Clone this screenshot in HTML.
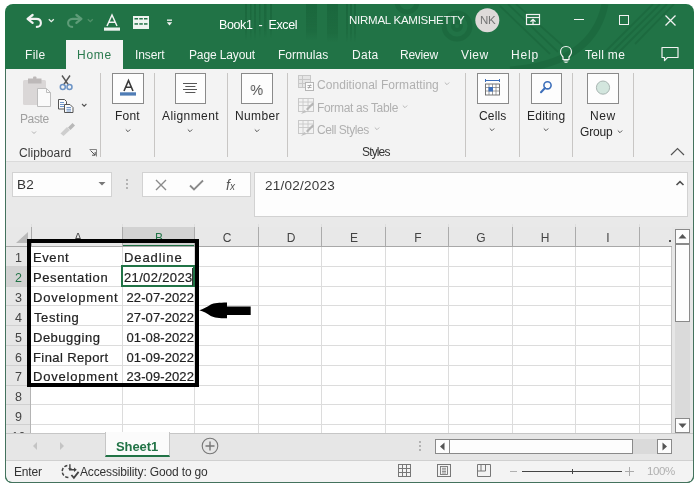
<!DOCTYPE html>
<html><head><meta charset="utf-8"><style>
html,body{margin:0;padding:0;}
body{width:700px;height:491px;position:relative;overflow:hidden;background:#ffffff;font-family:"Liberation Sans", sans-serif;}
.t{position:absolute;white-space:pre;font-family:"Liberation Sans", sans-serif;will-change:transform;}
</style></head><body>
<div style="position:absolute;left:5px;top:4px;width:689px;height:479px;background:#217346;border-radius:8px 8px 7px 7px;"></div>
<div style="position:absolute;left:6px;top:69px;width:687px;height:413px;background:#f3f3f3;border-radius:0 0 6px 6px;"></div>
<svg style="position:absolute;left:5px;top:4px;" width="689" height="65" viewBox="0 0 689 65">
<defs><linearGradient id="fd" x1="0" y1="0" x2="0" y2="1"><stop offset="0" stop-color="#1a663c" stop-opacity="1"/><stop offset="0.75" stop-color="#1a663c" stop-opacity="0.6"/><stop offset="1" stop-color="#1a663c" stop-opacity="0"/></linearGradient></defs>
<g fill="url(#fd)" opacity="0.9">
<rect x="240" y="0" width="2" height="36"/><rect x="245" y="0" width="1.5" height="36"/><rect x="249" y="0" width="2" height="36"/><rect x="254" y="0" width="1.5" height="34"/><rect x="259" y="0" width="2.5" height="34"/><rect x="265" y="0" width="2" height="34"/>
<rect x="301" y="0" width="11" height="36"/><rect x="322" y="0" width="11" height="38"/>
<rect x="341" y="0" width="2" height="38"/><rect x="345" y="0" width="2" height="38"/><rect x="349" y="0" width="2" height="38"/>
</g>
<g fill="none" stroke="#1b673d" opacity="0.7">
<circle cx="452" cy="22" r="13" stroke-width="5"/><circle cx="452" cy="22" r="4" stroke-width="4"/><circle cx="402" cy="-2" r="10" stroke-width="5"/>
<path d="M600 0 C 592 40, 560 62, 505 66" stroke-width="7"/>
<path d="M495 2 L545 50 M503 0 L553 48 M511 0 L558 42" stroke-width="1.8"/>
<path d="M655 0 L605 50 M648 0 L598 50 M662 0 L612 50 M669 0 L630 40" stroke-width="1.8"/>
</g>
</svg>
<svg style="position:absolute;left:24px;top:12px;" width="22" height="18" viewBox="0 0 22 18"><path d="M5 6.9 H12.3 C15.5 6.9 16.9 9 16.9 11 C16.9 13.2 15.3 14.9 12.8 14.9" fill="none" stroke="#f2f2f2" stroke-width="2.1" stroke-linecap="round"/><path d="M8.6 3 L3.6 6.9 L8.6 10.8" fill="none" stroke="#f2f2f2" stroke-width="2.3" stroke-linecap="round" stroke-linejoin="round"/></svg>
<svg style="position:absolute;left:47px;top:17px;" width="9" height="7" viewBox="0 0 9 7"><path d="M1.8 2.2 L4.3 4.7 L6.8 2.2" fill="none" stroke="#e8efe9" stroke-width="1.3"/></svg>
<svg style="position:absolute;left:63px;top:12px;" width="22" height="18" viewBox="0 0 22 18"><path d="M17 6.9 H9.7 C6.5 6.9 5.1 9 5.1 11 C5.1 13.2 6.7 14.9 9.2 14.9" fill="none" stroke="#5e9c78" stroke-width="2.1" stroke-linecap="round"/><path d="M13.4 3 L18.4 6.9 L13.4 10.8" fill="none" stroke="#5e9c78" stroke-width="2.3" stroke-linecap="round" stroke-linejoin="round"/></svg>
<svg style="position:absolute;left:86px;top:17px;" width="9" height="7" viewBox="0 0 9 7"><path d="M1.8 2.2 L4.3 4.7 L6.8 2.2" fill="none" stroke="#4f9068" stroke-width="1.3"/></svg>
<svg style="position:absolute;left:103px;top:13px;" width="18" height="19" viewBox="0 0 18 19"><path d="M4 13 L9 2 L14 13 M5.8 9.2 H12.2" fill="none" stroke="#f2f2f2" stroke-width="1.5"/><rect x="1" y="14.5" width="16" height="3.2" fill="#eef3ef"/></svg>
<svg style="position:absolute;left:132px;top:15px;" width="18" height="15" viewBox="0 0 18 15"><rect x="1" y="1" width="16" height="13" fill="#f0f4f1"/><g fill="#217346"><rect x="2.5" y="3" width="3.5" height="1.5"/><rect x="7.3" y="3" width="3.5" height="1.5"/><rect x="12" y="3" width="3.5" height="1.5"/><rect x="2.5" y="8.2" width="3.5" height="1.5"/><rect x="7.3" y="8.2" width="3.5" height="1.5"/><rect x="12" y="8.2" width="3.5" height="1.5"/></g></svg>
<svg style="position:absolute;left:165px;top:17px;" width="9" height="10" viewBox="0 0 9 10"><rect x="2" y="2.5" width="5" height="1.3" fill="#f2f2f2"/><path d="M1.8 5.2 H7.2 L4.5 8.6 Z" fill="#f2f2f2"/></svg>
<div class="t" style="left:219px;top:19px;font-size:12.5px;line-height:12.5px;color:#ffffff;font-weight:400;letter-spacing:-0.4px;">Book1&nbsp;&nbsp;-&nbsp;&nbsp;Excel</div>
<div class="t" style="left:349px;top:15px;font-size:11.5px;line-height:11.5px;color:#f4f7f5;font-weight:400;letter-spacing:-0.25px;">NIRMAL KAMISHETTY</div>
<svg style="position:absolute;left:475px;top:8px;" width="25" height="25" viewBox="0 0 25 25"><circle cx="12.3" cy="12.2" r="12" fill="#dedad9"/></svg>
<div class="t" style="left:480px;top:15px;font-size:11.5px;line-height:11.5px;color:#757575;font-weight:400;letter-spacing:-0.3px;">NK</div>
<svg style="position:absolute;left:525px;top:13px;" width="16" height="13" viewBox="0 0 16 13"><rect x="1.5" y="1.5" width="13" height="10" fill="none" stroke="#f2f2f2" stroke-width="1.2"/><path d="M1.5 4.5 H14.5" stroke="#f2f2f2" stroke-width="1.2"/><path d="M8 11 V6.5 M5.5 8.8 L8 6.3 L10.5 8.8" fill="none" stroke="#f2f2f2" stroke-width="1.3"/></svg>
<div style="position:absolute;left:574px;top:19px;width:10px;height:1px;background:#f2f2f2"></div>
<div style="position:absolute;left:619px;top:15px;width:10px;height:10px;border:1.2px solid #f2f2f2;box-sizing:border-box"></div>
<svg style="position:absolute;left:664px;top:14px;" width="13" height="13" viewBox="0 0 13 13"><path d="M1.5 1.5 L11.5 11.5 M11.5 1.5 L1.5 11.5" stroke="#f2f2f2" stroke-width="1.3"/></svg>
<div style="position:absolute;left:66px;top:40px;width:57px;height:29px;background:#f3f3f3"></div>
<div class="t" style="left:25px;top:49px;font-size:12px;line-height:12px;color:#f4f7f5;font-weight:400;letter-spacing:0.3px;">File</div>
<div class="t" style="left:135px;top:49px;font-size:12px;line-height:12px;color:#f4f7f5;font-weight:400;letter-spacing:-0.1px;">Insert</div>
<div class="t" style="left:189px;top:49px;font-size:12px;line-height:12px;color:#f4f7f5;font-weight:400;letter-spacing:-0.13px;">Page Layout</div>
<div class="t" style="left:278px;top:49px;font-size:12px;line-height:12px;color:#f4f7f5;font-weight:400;letter-spacing:0.03px;">Formulas</div>
<div class="t" style="left:352px;top:49px;font-size:12px;line-height:12px;color:#f4f7f5;font-weight:400;letter-spacing:0.3px;">Data</div>
<div class="t" style="left:400px;top:49px;font-size:12px;line-height:12px;color:#f4f7f5;font-weight:400;letter-spacing:-0.24px;">Review</div>
<div class="t" style="left:461px;top:49px;font-size:12px;line-height:12px;color:#f4f7f5;font-weight:400;letter-spacing:0.45px;">View</div>
<div class="t" style="left:511px;top:49px;font-size:12px;line-height:12px;color:#f4f7f5;font-weight:400;letter-spacing:0.8px;">Help</div>
<div class="t" style="left:585px;top:49px;font-size:12px;line-height:12px;color:#f4f7f5;font-weight:400;letter-spacing:0.3px;">Tell me</div>
<div class="t" style="left:77px;top:49px;font-size:12px;line-height:12px;color:#2a7a4e;font-weight:400;letter-spacing:0.75px;">Home</div>
<svg style="position:absolute;left:558px;top:45px;" width="16" height="19" viewBox="0 0 16 19"><path d="M8 1.5 C4.5 1.5 2.5 4 2.5 7 C2.5 9.5 4 10.8 5 12 V14.5 H11 V12 C12 10.8 13.5 9.5 13.5 7 C13.5 4 11.5 1.5 8 1.5 Z" fill="none" stroke="#f2f2f2" stroke-width="1.2"/><path d="M5.5 15.8 H10.5 M6.5 17.3 H9.5" stroke="#f2f2f2" stroke-width="1"/></svg>
<svg style="position:absolute;left:660px;top:45px;" width="20" height="18" viewBox="0 0 20 18"><path d="M2 2.5 H18 V12.5 H7.5 L4.5 15.5 V12.5 H2 Z" fill="none" stroke="#f2f2f2" stroke-width="1.2" stroke-linejoin="round"/></svg>
<div style="position:absolute;left:100px;top:73px;width:1px;height:84px;background:#c8c6c4"></div>
<div style="position:absolute;left:154px;top:73px;width:1px;height:84px;background:#c8c6c4"></div>
<div style="position:absolute;left:227px;top:73px;width:1px;height:84px;background:#c8c6c4"></div>
<div style="position:absolute;left:287px;top:73px;width:1px;height:84px;background:#c8c6c4"></div>
<div style="position:absolute;left:465px;top:73px;width:1px;height:84px;background:#c8c6c4"></div>
<div style="position:absolute;left:519px;top:73px;width:1px;height:84px;background:#c8c6c4"></div>
<div style="position:absolute;left:572px;top:73px;width:1px;height:84px;background:#c8c6c4"></div>
<div style="position:absolute;left:633px;top:73px;width:1px;height:84px;background:#c8c6c4"></div>
<svg style="position:absolute;left:18px;top:72px;" width="40" height="40" viewBox="0 0 40 40"><rect x="5" y="8" width="23" height="25" rx="1.5" fill="#dad7d7"/>
<path d="M10 6.5 H23.5 V11.5 H10 Z" fill="#bdb9b9"/><rect x="15" y="4.5" width="3.5" height="3" rx="1" fill="#bdb9b9"/>
<path d="M19.5 16.5 H28.5 L32.5 20.5 V34.5 H19.5 Z" fill="#fafafa" stroke="#bdbdbd" stroke-width="1"/>
<path d="M28.5 16.5 V20.5 H32.5" fill="none" stroke="#bdbdbd" stroke-width="1"/></svg>
<div class="t" style="left:20px;top:113px;font-size:12px;line-height:12px;color:#a0a0a0;font-weight:400;letter-spacing:-0.4px;">Paste</div>
<svg style="position:absolute;left:30px;top:130px;" width="8" height="6" viewBox="0 0 8 6"><path d="M2 1.5 L4 3.5 L6 1.5" fill="none" stroke="#b0b0b0" stroke-width="1"/></svg>
<svg style="position:absolute;left:57px;top:74px;" width="18" height="18" viewBox="0 0 18 18"><path d="M5 1.5 L11.5 11 M13 1.5 L6.5 11" stroke="#555" stroke-width="1.4"/><circle cx="5.8" cy="13" r="2.5" fill="none" stroke="#6b93c5" stroke-width="1.5"/><circle cx="12.5" cy="13" r="2.5" fill="none" stroke="#6b93c5" stroke-width="1.5"/></svg>
<svg style="position:absolute;left:57px;top:98px;" width="18" height="16" viewBox="0 0 18 16"><path d="M1.5 1.5 H7.5 L9.5 3.5 V11 H1.5 Z" fill="#fbfbfb" stroke="#555" stroke-width="1"/><path d="M3 4.5 H7 M3 6.5 H7 M3 8.5 H7" stroke="#4e7fbf" stroke-width="0.8"/><path d="M7.5 6.5 H13 L16 9.5 V14.5 H7.5 Z" fill="#fbfbfb" stroke="#555" stroke-width="1"/><path d="M9.5 9.5 H14 M9.5 11.3 H14 M9.5 13 H14" stroke="#4e7fbf" stroke-width="0.8"/></svg>
<svg style="position:absolute;left:80px;top:102px;" width="8" height="6" viewBox="0 0 8 6"><path d="M2 2 L4.2 4.2 L6.4 2" fill="none" stroke="#555" stroke-width="1.1"/></svg>
<svg style="position:absolute;left:58px;top:120px;" width="18" height="17" viewBox="0 0 18 17"><path d="M10 7.5 L14.5 3 L17 5.5 L12.5 10 Z" fill="#b8b8b8"/><path d="M2.5 13.5 L9 7 L12 10 L5.5 16 Z" fill="#cecece"/></svg>
<div class="t" style="left:19px;top:147px;font-size:12px;line-height:12px;color:#3a3a3a;font-weight:400;letter-spacing:0.1px;">Clipboard</div>
<svg style="position:absolute;left:88px;top:148px;" width="10" height="10" viewBox="0 0 10 10"><path d="M1.5 1.5 H8.5 V8.5" fill="none" stroke="#777" stroke-width="0.9"/><path d="M2.5 2.5 L7 7 M4 7.2 H7.2 V4" fill="none" stroke="#555" stroke-width="1"/></svg>
<div style="position:absolute;left:112px;top:73px;width:32px;height:31px;background:#fdfdfd;border:1px solid #8a8a8a;box-sizing:border-box"></div>
<svg style="position:absolute;left:112px;top:73px;" width="32" height="31" viewBox="0 0 32 31"><path d="M12 18 L16.5 7.5 L21 18 M13.6 14.3 H19.4" fill="none" stroke="#3a3a3a" stroke-width="1.6"/><rect x="8" y="19.3" width="16" height="3.3" fill="#4f7cb5"/></svg>
<div class="t" style="left:115px;top:110px;font-size:12px;line-height:12px;color:#262626;font-weight:400;letter-spacing:0.2px;">Font</div>
<svg style="position:absolute;left:124px;top:128px;" width="8" height="6" viewBox="0 0 8 6"><path d="M1.8 1.5 L4 3.7 L6.2 1.5" fill="none" stroke="#555" stroke-width="1"/></svg>
<div style="position:absolute;left:175px;top:73px;width:31px;height:31px;background:#fdfdfd;border:1px solid #8a8a8a;box-sizing:border-box"></div>
<svg style="position:absolute;left:175px;top:73px;" width="31" height="31" viewBox="0 0 31 31"><path d="M8 10.5 H22 M10.3 13.5 H20.4 M8 16.5 H22 M10.3 19.5 H20.4" stroke="#555" stroke-width="1.1"/></svg>
<div class="t" style="left:162px;top:110px;font-size:12px;line-height:12px;color:#262626;font-weight:400;letter-spacing:0.4px;">Alignment</div>
<svg style="position:absolute;left:186px;top:128px;" width="8" height="6" viewBox="0 0 8 6"><path d="M1.8 1.5 L4 3.7 L6.2 1.5" fill="none" stroke="#555" stroke-width="1"/></svg>
<div style="position:absolute;left:241px;top:73px;width:32px;height:31px;background:#fdfdfd;border:1px solid #8a8a8a;box-sizing:border-box"></div>
<div class="t" style="left:250px;top:82px;font-size:15px;line-height:15px;color:#505050;font-weight:400;letter-spacing:0px;transform:scaleX(0.95);">%</div>
<div class="t" style="left:235px;top:110px;font-size:12px;line-height:12px;color:#262626;font-weight:400;letter-spacing:0.35px;">Number</div>
<svg style="position:absolute;left:253px;top:128px;" width="8" height="6" viewBox="0 0 8 6"><path d="M1.8 1.5 L4 3.7 L6.2 1.5" fill="none" stroke="#555" stroke-width="1"/></svg>
<svg style="position:absolute;left:297px;top:74px;" width="18" height="18" viewBox="0 0 18 18"><rect x="1.5" y="1.5" width="12" height="12" fill="#e6e6e6" stroke="#c8c8c8" stroke-width="1"/><path d="M1.5 5.5 H13.5 M1.5 9.5 H13.5 M5.5 1.5 V13.5" stroke="#c8c8c8" stroke-width="1"/><rect x="8.5" y="8.5" width="8" height="8" fill="#fafafa" stroke="#b5b5b5" stroke-width="1"/><path d="M10.5 11.5 H14.5 M10.5 13.5 H14.5 M13.5 10.5 L11.5 14.5" stroke="#9a9a9a" stroke-width="0.8"/></svg>
<div class="t" style="left:317px;top:79px;font-size:12px;line-height:12px;color:#b0b0b0;font-weight:400;letter-spacing:0.05px;">Conditional Formatting</div>
<svg style="position:absolute;left:443px;top:81px;" width="8" height="6" viewBox="0 0 8 6"><path d="M1.8 1.5 L4 3.7 L6.2 1.5" fill="none" stroke="#b8b8b8" stroke-width="1"/></svg>
<svg style="position:absolute;left:297px;top:97px;" width="18" height="18" viewBox="0 0 18 18"><rect x="1.5" y="1.5" width="15" height="13" fill="#f2f2f2" stroke="#c8c8c8" stroke-width="1"/><path d="M1.5 5 H16.5 M1.5 8.5 H16.5 M6 1.5 V14.5 M11 1.5 V14.5" stroke="#c8c8c8" stroke-width="0.9"/><path d="M9 12 L15.5 5.5 L17 7 L10.5 13.5 Z" fill="#b5b5b5"/><path d="M4 17 L7.5 13 L9.5 15 Z" fill="#c0c0c0"/></svg>
<div class="t" style="left:317px;top:102px;font-size:12px;line-height:12px;color:#b0b0b0;font-weight:400;letter-spacing:-0.32px;">Format as Table</div>
<svg style="position:absolute;left:401px;top:104px;" width="8" height="6" viewBox="0 0 8 6"><path d="M1.8 1.5 L4 3.7 L6.2 1.5" fill="none" stroke="#b8b8b8" stroke-width="1"/></svg>
<svg style="position:absolute;left:297px;top:119px;" width="18" height="18" viewBox="0 0 18 18"><rect x="1.5" y="1.5" width="15" height="13" fill="#f2f2f2" stroke="#c8c8c8" stroke-width="1"/><path d="M1.5 5 H16.5 M1.5 8.5 H16.5 M6 1.5 V14.5 M11 1.5 V14.5" stroke="#c8c8c8" stroke-width="0.9"/><path d="M9 12 L15.5 5.5 L17 7 L10.5 13.5 Z" fill="#b5b5b5"/><path d="M4 17 L7.5 13 L9.5 15 Z" fill="#c0c0c0"/></svg>
<div class="t" style="left:317px;top:124px;font-size:12px;line-height:12px;color:#b0b0b0;font-weight:400;letter-spacing:-0.45px;">Cell Styles</div>
<svg style="position:absolute;left:373px;top:126px;" width="8" height="6" viewBox="0 0 8 6"><path d="M1.8 1.5 L4 3.7 L6.2 1.5" fill="none" stroke="#b8b8b8" stroke-width="1"/></svg>
<div class="t" style="left:362px;top:146px;font-size:12px;line-height:12px;color:#333;font-weight:400;letter-spacing:-0.85px;">Styles</div>
<div style="position:absolute;left:477px;top:73px;width:32px;height:31px;background:#fdfdfd;border:1px solid #8a8a8a;box-sizing:border-box"></div>
<svg style="position:absolute;left:477px;top:73px;" width="32" height="31" viewBox="0 0 32 31"><path d="M8.5 7.5 H22.5 M8.5 6 V9 M22.5 6 V9" stroke="#3d6fba" stroke-width="1"/><rect x="8.5" y="11" width="14" height="11" fill="#fff" stroke="#666" stroke-width="0.9"/><path d="M8.5 14.5 H22.5 M8.5 18 H22.5 M12 11 V22 M15.5 11 V22 M19 11 V22" stroke="#777" stroke-width="0.7"/><rect x="11.5" y="14" width="4.5" height="4.5" fill="#3d6fba"/></svg>
<div class="t" style="left:479px;top:110px;font-size:12px;line-height:12px;color:#262626;font-weight:400;letter-spacing:0.15px;">Cells</div>
<svg style="position:absolute;left:488px;top:127px;" width="8" height="6" viewBox="0 0 8 6"><path d="M1.8 1.5 L4 3.7 L6.2 1.5" fill="none" stroke="#555" stroke-width="1"/></svg>
<div style="position:absolute;left:531px;top:73px;width:31px;height:31px;background:#fdfdfd;border:1px solid #8a8a8a;box-sizing:border-box"></div>
<svg style="position:absolute;left:531px;top:73px;" width="31" height="31" viewBox="0 0 31 31"><circle cx="16.5" cy="12.3" r="3.6" fill="none" stroke="#3d6fba" stroke-width="1.6"/><path d="M14 15 L10 19.3" stroke="#3d6fba" stroke-width="2" stroke-linecap="round"/></svg>
<div class="t" style="left:527px;top:110px;font-size:12px;line-height:12px;color:#262626;font-weight:400;letter-spacing:0.25px;">Editing</div>
<svg style="position:absolute;left:542px;top:127px;" width="8" height="6" viewBox="0 0 8 6"><path d="M1.8 1.5 L4 3.7 L6.2 1.5" fill="none" stroke="#555" stroke-width="1"/></svg>
<div style="position:absolute;left:587px;top:73px;width:32px;height:31px;background:#fdfdfd;border:1px solid #8a8a8a;box-sizing:border-box"></div>
<svg style="position:absolute;left:587px;top:73px;" width="32" height="31" viewBox="0 0 32 31"><circle cx="16" cy="14.6" r="6.6" fill="#d3e6de" stroke="#a0aeaa" stroke-width="0.9"/></svg>
<div class="t" style="left:590px;top:110px;font-size:12px;line-height:12px;color:#262626;font-weight:400;letter-spacing:0.55px;">New</div>
<div class="t" style="left:580px;top:126px;font-size:12px;line-height:12px;color:#262626;font-weight:400;letter-spacing:-0.2px;">Group</div>
<svg style="position:absolute;left:616px;top:129px;" width="8" height="6" viewBox="0 0 8 6"><path d="M1.8 1.5 L4 3.7 L6.2 1.5" fill="none" stroke="#555" stroke-width="1"/></svg>
<svg style="position:absolute;left:669px;top:146px;" width="17" height="11" viewBox="0 0 17 11"><path d="M2 9 L8.5 2.5 L15 9" fill="none" stroke="#555" stroke-width="1.2"/></svg>
<div style="position:absolute;left:6px;top:161px;width:687px;height:66px;background:#e9e9e9;border-top:1px solid #dadada;box-sizing:border-box"></div>
<div style="position:absolute;left:12px;top:172px;width:100px;height:25px;background:#fdfdfd;border:1px solid #d2d2d2;box-sizing:border-box"></div>
<div class="t" style="left:17px;top:178px;font-size:13.5px;line-height:13.5px;color:#333;font-weight:400;letter-spacing:0.3px;">B2</div>
<svg style="position:absolute;left:97px;top:180px;" width="10" height="7" viewBox="0 0 10 7"><path d="M1.5 2 H8.5 L5 5.5 Z" fill="#777"/></svg>
<svg style="position:absolute;left:124px;top:178px;" width="6" height="12" viewBox="0 0 6 12"><circle cx="3" cy="2" r="0.9" fill="#9a9a9a"/><circle cx="3" cy="6" r="0.9" fill="#9a9a9a"/><circle cx="3" cy="10" r="0.9" fill="#9a9a9a"/></svg>
<div style="position:absolute;left:142px;top:172px;width:109px;height:25px;background:#fdfdfd;border:1px solid #d2d2d2;box-sizing:border-box"></div>
<svg style="position:absolute;left:154px;top:178px;" width="14" height="14" viewBox="0 0 14 14"><path d="M2 2 L12 12 M12 2 L2 12" stroke="#8a8a8a" stroke-width="1.4"/></svg>
<svg style="position:absolute;left:188px;top:178px;" width="17" height="14" viewBox="0 0 17 14"><path d="M2 7.5 L6 11.5 L15 2.5" fill="none" stroke="#8a8a8a" stroke-width="1.8"/></svg>
<div class="t" style="left:226px;top:178px;font-size:14px;line-height:14px;color:#555;font-weight:400;letter-spacing:0px;font-family:"Liberation Serif",serif;"><i>f</i><span style="font-size:10px"><i>x</i></span></div>
<div style="position:absolute;left:254px;top:172px;width:434px;height:45px;background:#fdfdfd;border:1px solid #d2d2d2;box-sizing:border-box"></div>
<div class="t" style="left:265px;top:179px;font-size:13.5px;line-height:13.5px;color:#3a3a3a;font-weight:400;letter-spacing:0.25px;">21/02/2023</div>
<svg style="position:absolute;left:674px;top:178px;" width="12" height="9" viewBox="0 0 12 9"><path d="M2.5 7 L6 3.6 L9.5 7" fill="none" stroke="#505050" stroke-width="1.6"/></svg>
<div style="position:absolute;left:6px;top:227px;width:666px;height:19px;background:#e8e8e8"></div>
<div style="position:absolute;left:122px;top:227px;width:73px;height:19px;background:#d2d2d2"></div>
<div style="position:absolute;left:122px;top:245px;width:73px;height:2px;background:#217346"></div>
<svg style="position:absolute;left:14px;top:230px;" width="16" height="14" viewBox="0 0 16 14"><path d="M14 2 V13 H2 Z" fill="#b9b9b9"/></svg>
<div style="position:absolute;left:31px;top:224px;width:1px;height:3px;background:#dedede"></div>
<div style="position:absolute;left:31px;top:227px;width:1px;height:19px;background:#ababab"></div>
<div style="position:absolute;left:122px;top:224px;width:1px;height:3px;background:#dedede"></div>
<div style="position:absolute;left:122px;top:227px;width:1px;height:19px;background:#ababab"></div>
<div style="position:absolute;left:194px;top:224px;width:1px;height:3px;background:#dedede"></div>
<div style="position:absolute;left:194px;top:227px;width:1px;height:19px;background:#ababab"></div>
<div style="position:absolute;left:258px;top:224px;width:1px;height:3px;background:#dedede"></div>
<div style="position:absolute;left:258px;top:227px;width:1px;height:19px;background:#ababab"></div>
<div style="position:absolute;left:321px;top:224px;width:1px;height:3px;background:#dedede"></div>
<div style="position:absolute;left:321px;top:227px;width:1px;height:19px;background:#ababab"></div>
<div style="position:absolute;left:385px;top:224px;width:1px;height:3px;background:#dedede"></div>
<div style="position:absolute;left:385px;top:227px;width:1px;height:19px;background:#ababab"></div>
<div style="position:absolute;left:448px;top:224px;width:1px;height:3px;background:#dedede"></div>
<div style="position:absolute;left:448px;top:227px;width:1px;height:19px;background:#ababab"></div>
<div style="position:absolute;left:512px;top:224px;width:1px;height:3px;background:#dedede"></div>
<div style="position:absolute;left:512px;top:227px;width:1px;height:19px;background:#ababab"></div>
<div style="position:absolute;left:575px;top:224px;width:1px;height:3px;background:#dedede"></div>
<div style="position:absolute;left:575px;top:227px;width:1px;height:19px;background:#ababab"></div>
<div style="position:absolute;left:639px;top:224px;width:1px;height:3px;background:#dedede"></div>
<div style="position:absolute;left:639px;top:227px;width:1px;height:19px;background:#ababab"></div>
<div class="t" style="left:67.5px;width:20px;text-align:center;top:232px;font-size:12px;line-height:12px;color:#444">A</div>
<div class="t" style="left:149.0px;width:20px;text-align:center;top:232px;font-size:12px;line-height:12px;color:#217346">B</div>
<div class="t" style="left:217.0px;width:20px;text-align:center;top:232px;font-size:12px;line-height:12px;color:#444">C</div>
<div class="t" style="left:280.5px;width:20px;text-align:center;top:232px;font-size:12px;line-height:12px;color:#444">D</div>
<div class="t" style="left:344.0px;width:20px;text-align:center;top:232px;font-size:12px;line-height:12px;color:#444">E</div>
<div class="t" style="left:407.5px;width:20px;text-align:center;top:232px;font-size:12px;line-height:12px;color:#444">F</div>
<div class="t" style="left:471.0px;width:20px;text-align:center;top:232px;font-size:12px;line-height:12px;color:#444">G</div>
<div class="t" style="left:534.5px;width:20px;text-align:center;top:232px;font-size:12px;line-height:12px;color:#444">H</div>
<div class="t" style="left:598.0px;width:20px;text-align:center;top:232px;font-size:12px;line-height:12px;color:#444">I</div>
<div style="position:absolute;left:669px;top:240px;width:2px;height:2px;background:#555"></div>
<div style="position:absolute;left:6px;top:246px;width:666px;height:1px;background:#a8a8a8"></div>
<div style="position:absolute;left:6px;top:247px;width:25px;height:186px;background:#e6e6e6"></div>
<div style="position:absolute;left:6px;top:266px;width:25px;height:20px;background:#d2d2d2"></div>
<div style="position:absolute;left:31px;top:247px;width:641px;height:186px;background:#ffffff"></div>
<div style="position:absolute;left:31px;top:266px;width:641px;height:1px;background:#dcdcdc"></div>
<div style="position:absolute;left:6px;top:266px;width:25px;height:1px;background:#d0d0d0"></div>
<div style="position:absolute;left:31px;top:286px;width:641px;height:1px;background:#dcdcdc"></div>
<div style="position:absolute;left:6px;top:286px;width:25px;height:1px;background:#d0d0d0"></div>
<div style="position:absolute;left:31px;top:305px;width:641px;height:1px;background:#dcdcdc"></div>
<div style="position:absolute;left:6px;top:305px;width:25px;height:1px;background:#d0d0d0"></div>
<div style="position:absolute;left:31px;top:325px;width:641px;height:1px;background:#dcdcdc"></div>
<div style="position:absolute;left:6px;top:325px;width:25px;height:1px;background:#d0d0d0"></div>
<div style="position:absolute;left:31px;top:345px;width:641px;height:1px;background:#dcdcdc"></div>
<div style="position:absolute;left:6px;top:345px;width:25px;height:1px;background:#d0d0d0"></div>
<div style="position:absolute;left:31px;top:365px;width:641px;height:1px;background:#dcdcdc"></div>
<div style="position:absolute;left:6px;top:365px;width:25px;height:1px;background:#d0d0d0"></div>
<div style="position:absolute;left:31px;top:385px;width:641px;height:1px;background:#dcdcdc"></div>
<div style="position:absolute;left:6px;top:385px;width:25px;height:1px;background:#d0d0d0"></div>
<div style="position:absolute;left:31px;top:404px;width:641px;height:1px;background:#dcdcdc"></div>
<div style="position:absolute;left:6px;top:404px;width:25px;height:1px;background:#d0d0d0"></div>
<div style="position:absolute;left:31px;top:424px;width:641px;height:1px;background:#dcdcdc"></div>
<div style="position:absolute;left:6px;top:424px;width:25px;height:1px;background:#d0d0d0"></div>
<div style="position:absolute;left:122px;top:247px;width:1px;height:186px;background:#dcdcdc"></div>
<div style="position:absolute;left:194px;top:247px;width:1px;height:186px;background:#dcdcdc"></div>
<div style="position:absolute;left:258px;top:247px;width:1px;height:186px;background:#dcdcdc"></div>
<div style="position:absolute;left:321px;top:247px;width:1px;height:186px;background:#dcdcdc"></div>
<div style="position:absolute;left:385px;top:247px;width:1px;height:186px;background:#dcdcdc"></div>
<div style="position:absolute;left:448px;top:247px;width:1px;height:186px;background:#dcdcdc"></div>
<div style="position:absolute;left:512px;top:247px;width:1px;height:186px;background:#dcdcdc"></div>
<div style="position:absolute;left:575px;top:247px;width:1px;height:186px;background:#dcdcdc"></div>
<div style="position:absolute;left:639px;top:247px;width:1px;height:186px;background:#dcdcdc"></div>
<div style="position:absolute;left:30px;top:247px;width:1px;height:186px;background:#b4b4b4"></div>
<div style="position:absolute;left:671px;top:247px;width:1px;height:186px;background:#c6c6c6"></div>
<div class="t" style="left:6px;width:25px;text-align:center;top:252px;font-size:12.5px;line-height:12px;color:#444">1</div>
<div class="t" style="left:6px;width:25px;text-align:center;top:272px;font-size:12.5px;line-height:12px;color:#217346">2</div>
<div class="t" style="left:6px;width:25px;text-align:center;top:292px;font-size:12.5px;line-height:12px;color:#444">3</div>
<div class="t" style="left:6px;width:25px;text-align:center;top:312px;font-size:12.5px;line-height:12px;color:#444">4</div>
<div class="t" style="left:6px;width:25px;text-align:center;top:332px;font-size:12.5px;line-height:12px;color:#444">5</div>
<div class="t" style="left:6px;width:25px;text-align:center;top:352px;font-size:12.5px;line-height:12px;color:#444">6</div>
<div class="t" style="left:6px;width:25px;text-align:center;top:371px;font-size:12.5px;line-height:12px;color:#444">7</div>
<div class="t" style="left:6px;width:25px;text-align:center;top:391px;font-size:12.5px;line-height:12px;color:#444">8</div>
<div class="t" style="left:6px;width:25px;text-align:center;top:411px;font-size:12.5px;line-height:12px;color:#444">9</div>
<div class="t" style="left:6px;width:25px;text-align:center;top:431px;font-size:12.5px;line-height:12px;color:#444">10</div>
<div class="t" style="left:33px;top:251px;font-size:13px;line-height:13px;color:#222;font-weight:400;letter-spacing:0.6px;-webkit-text-stroke:0.2px #222;">Event</div>
<div class="t" style="left:124px;top:251px;font-size:13px;line-height:13px;color:#222;font-weight:400;letter-spacing:0.9px;-webkit-text-stroke:0.2px #222;">Deadline</div>
<div class="t" style="left:33px;top:271px;font-size:13px;line-height:13px;color:#222;font-weight:400;letter-spacing:0.6px;-webkit-text-stroke:0.2px #222;">Pesentation</div>
<div class="t" style="left:124px;top:271px;font-size:13px;line-height:13px;color:#222;font-weight:400;letter-spacing:0.35px;-webkit-text-stroke:0.2px #222;">21/02/2023</div>
<div class="t" style="left:33px;top:291px;font-size:13px;line-height:13px;color:#222;font-weight:400;letter-spacing:0.8px;-webkit-text-stroke:0.2px #222;">Dovelopment</div>
<div class="t" style="left:120px;width:74px;text-align:right;top:291px;font-size:13px;line-height:13px;color:#222;letter-spacing:0.1px;-webkit-text-stroke:0.2px #222">22-07-2022</div>
<div class="t" style="left:33px;top:311px;font-size:13px;line-height:13px;color:#222;font-weight:400;letter-spacing:0.6px;margin-left:1px;-webkit-text-stroke:0.2px #222;">Testing</div>
<div class="t" style="left:120px;width:74px;text-align:right;top:311px;font-size:13px;line-height:13px;color:#222;letter-spacing:0.1px;-webkit-text-stroke:0.2px #222">27-07-2022</div>
<div class="t" style="left:33px;top:331px;font-size:13px;line-height:13px;color:#222;font-weight:400;letter-spacing:0.5px;-webkit-text-stroke:0.2px #222;">Debugging</div>
<div class="t" style="left:120px;width:74px;text-align:right;top:331px;font-size:13px;line-height:13px;color:#222;letter-spacing:0.1px;-webkit-text-stroke:0.2px #222">01-08-2022</div>
<div class="t" style="left:33px;top:351px;font-size:13px;line-height:13px;color:#222;font-weight:400;letter-spacing:0.4px;-webkit-text-stroke:0.2px #222;">Final Report</div>
<div class="t" style="left:120px;width:74px;text-align:right;top:351px;font-size:13px;line-height:13px;color:#222;letter-spacing:0.1px;-webkit-text-stroke:0.2px #222">01-09-2022</div>
<div class="t" style="left:33px;top:370px;font-size:13px;line-height:13px;color:#222;font-weight:400;letter-spacing:0.8px;-webkit-text-stroke:0.2px #222;">Dovelopment</div>
<div class="t" style="left:120px;width:74px;text-align:right;top:370px;font-size:13px;line-height:13px;color:#222;letter-spacing:0.1px;-webkit-text-stroke:0.2px #222">23-09-2022</div>
<div style="position:absolute;left:121px;top:265px;width:74px;height:22px;border:2px solid #217346;box-sizing:border-box"></div>
<div style="position:absolute;left:192px;top:268px;width:1px;height:18px;background:#333"></div>
<div style="position:absolute;left:27px;top:239px;width:172px;height:148px;border:4.5px solid #000;box-sizing:border-box"></div>
<svg style="position:absolute;left:195px;top:298px;" width="60" height="24" viewBox="0 0 60 24"><path d="M4.3 12.2 C 8 11.2, 12.5 9, 15.8 6.6 C 19 5, 24 4.6, 32 4.5 V 8.4 H 55.7 V 17 H 32 V 20.3 C 24 20.1, 19 19.6, 15.8 17.9 C 12.5 15.5, 8 13.2, 4.3 12.2 Z" fill="#000"/></svg>
<div style="position:absolute;left:672px;top:227px;width:21px;height:206px;background:#e6e6e6"></div>
<div style="position:absolute;left:675px;top:244px;width:15px;height:175px;background:#dadada"></div>
<div style="position:absolute;left:675px;top:229px;width:15px;height:15px;background:#fdfdfd;border:1px solid #8a8a8a;box-sizing:border-box"></div>
<svg style="position:absolute;left:675px;top:229px;" width="15" height="15" viewBox="0 0 15 15"><path d="M3.5 9.5 H11.5 L7.5 5 Z" fill="#555"/></svg>
<div style="position:absolute;left:675px;top:244px;width:15px;height:78px;background:#fdfdfd;border:1px solid #8a8a8a;box-sizing:border-box"></div>
<div style="position:absolute;left:675px;top:418px;width:15px;height:15px;background:#fdfdfd;border:1px solid #8a8a8a;box-sizing:border-box"></div>
<svg style="position:absolute;left:675px;top:418px;" width="15" height="15" viewBox="0 0 15 15"><path d="M3.5 5.5 H11.5 L7.5 10 Z" fill="#555"/></svg>
<div style="position:absolute;left:6px;top:433px;width:687px;height:27px;background:#e6e6e6;border-top:1px solid #c6c6c6;box-sizing:border-box"></div>
<svg style="position:absolute;left:30px;top:440px;" width="10" height="12" viewBox="0 0 10 12"><path d="M7 2 L3 6 L7 10 Z" fill="#c4c4c4"/></svg>
<svg style="position:absolute;left:57px;top:440px;" width="10" height="12" viewBox="0 0 10 12"><path d="M3 2 L7 6 L3 10 Z" fill="#c4c4c4"/></svg>
<div style="position:absolute;left:105px;top:432px;width:65px;height:25px;background:#fbfbfb;border-left:1px solid #c6c6c6;border-right:1px solid #c6c6c6;border-bottom:2px solid #217346;box-sizing:border-box"></div>
<div class="t" style="left:116px;top:440px;font-size:13px;line-height:13px;color:#217346;font-weight:700;letter-spacing:-0.1px;">Sheet1</div>
<svg style="position:absolute;left:201px;top:437px;" width="18" height="18" viewBox="0 0 18 18"><circle cx="9" cy="9" r="7.8" fill="none" stroke="#777" stroke-width="1.1"/><path d="M9 4.5 V13.5 M4.5 9 H13.5" stroke="#777" stroke-width="1.4"/></svg>
<svg style="position:absolute;left:417px;top:440px;" width="6" height="12" viewBox="0 0 6 12"><circle cx="3" cy="2" r="0.9" fill="#9a9a9a"/><circle cx="3" cy="6" r="0.9" fill="#9a9a9a"/><circle cx="3" cy="10" r="0.9" fill="#9a9a9a"/></svg>
<div style="position:absolute;left:435px;top:439px;width:222px;height:15px;background:#dadada"></div>
<div style="position:absolute;left:449px;top:439px;width:184px;height:15px;background:#fdfdfd;border:1px solid #8a8a8a;box-sizing:border-box"></div>
<div style="position:absolute;left:435px;top:439px;width:15px;height:15px;background:#fdfdfd;border:1px solid #8a8a8a;box-sizing:border-box"></div>
<svg style="position:absolute;left:435px;top:439px;" width="15" height="15" viewBox="0 0 15 15"><path d="M9.5 3.5 V11.5 L5 7.5 Z" fill="#555"/></svg>
<div style="position:absolute;left:657px;top:439px;width:15px;height:15px;background:#fdfdfd;border:1px solid #8a8a8a;box-sizing:border-box"></div>
<svg style="position:absolute;left:657px;top:439px;" width="15" height="15" viewBox="0 0 15 15"><path d="M5.5 3.5 V11.5 L10 7.5 Z" fill="#555"/></svg>
<div style="position:absolute;left:6px;top:460px;width:687px;height:22px;background:#f3f3f3;border-top:1px solid #d0d0d0;box-sizing:border-box;border-radius:0 0 6px 6px"></div>
<div class="t" style="left:14px;top:466px;font-size:12px;line-height:12px;color:#333;font-weight:400;letter-spacing:-0.2px;">Enter</div>
<svg style="position:absolute;left:61px;top:463px;" width="20" height="18" viewBox="0 0 20 18"><path d="M6.3 2.4 A6 6 0 0 0 8.2 14.3" fill="none" stroke="#444" stroke-width="1.5" stroke-dasharray="3.2 1.6"/><path d="M8.9 1.3 V6.8 H14" fill="none" stroke="#444" stroke-width="1.4"/><path d="M6.9 5.2 L8.9 7.6 L10.9 5.2 Z M13 4.6 L15.8 6.8 L13 9 Z" fill="#444"/><path d="M10.4 12 L12.9 14.8 L17.6 8.9" fill="none" stroke="#444" stroke-width="1.8"/></svg>
<div class="t" style="left:80px;top:466px;font-size:12px;line-height:12px;color:#333;font-weight:400;letter-spacing:-0.15px;">Accessibility: Good to go</div>
<svg style="position:absolute;left:397px;top:463px;" width="15" height="15" viewBox="0 0 15 15"><rect x="1.5" y="1.5" width="12" height="12" fill="none" stroke="#777" stroke-width="1"/><path d="M1.5 5.5 H13.5 M1.5 9.5 H13.5 M5.5 1.5 V13.5 M9.5 1.5 V13.5" stroke="#777" stroke-width="1"/></svg>
<svg style="position:absolute;left:436px;top:463px;" width="16" height="15" viewBox="0 0 16 15"><rect x="1.5" y="1.5" width="13" height="12" fill="none" stroke="#777" stroke-width="1"/><rect x="4.5" y="3.5" width="7" height="8" fill="none" stroke="#777" stroke-width="0.9"/><path d="M6 5.3 H10 M6 6.9 H10 M6 8.5 H10 M6 10 H10" stroke="#777" stroke-width="0.8"/></svg>
<svg style="position:absolute;left:476px;top:463px;" width="16" height="15" viewBox="0 0 16 15"><path d="M1.5 1.5 H14.5 V13.5 H1.5 Z M1.5 8 H9.5 V1.5 M5 1.5 V8" fill="none" stroke="#777" stroke-width="1"/></svg>
<div style="position:absolute;left:510px;top:471px;width:7px;height:1px;background:#b0b0b0"></div>
<div style="position:absolute;left:522px;top:471px;width:100px;height:1px;background:#444"></div>
<div style="position:absolute;left:572px;top:469px;width:1px;height:5px;background:#444"></div>
<svg style="position:absolute;left:624px;top:466px;" width="11" height="11" viewBox="0 0 11 11"><path d="M5.5 1 V10 M1 5.5 H10" stroke="#ababab" stroke-width="1"/></svg>
<div class="t" style="left:647px;top:466px;font-size:11.5px;line-height:11.5px;color:#b0b0b0;font-weight:400;letter-spacing:-0.4px;">100%</div>
<div style="position:absolute;left:5px;top:69px;width:689px;height:414px;border:1px solid #44725d;border-top:none;border-radius:0 0 7px 7px;box-sizing:border-box"></div>
</body></html>
